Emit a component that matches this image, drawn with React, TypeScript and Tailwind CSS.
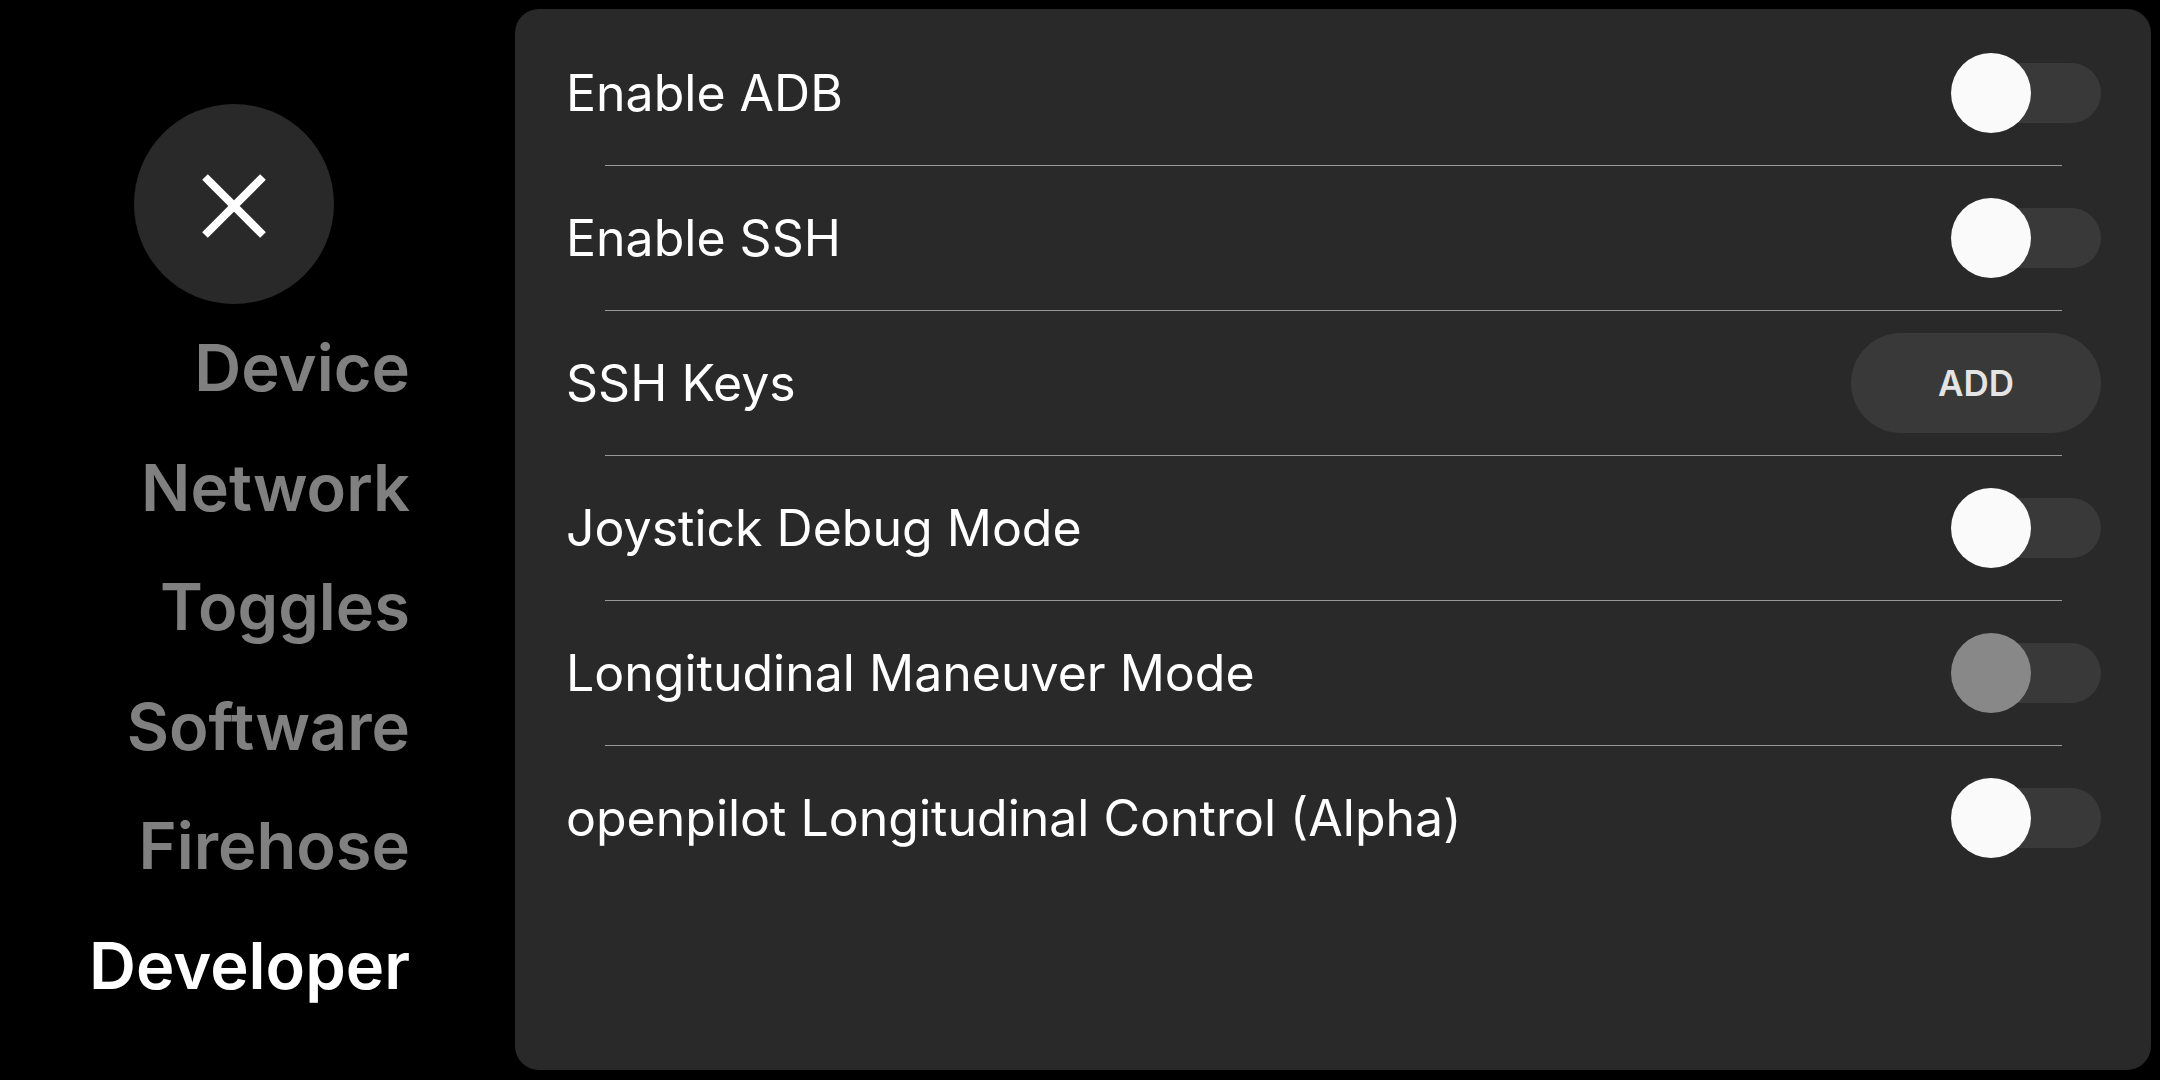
import React from "react";

type Row =
  | { label: string; kind: "toggle"; disabled?: boolean }
  | { label: string; kind: "button"; action: string };

const rows: Row[] = [
  { label: "Enable ADB", kind: "toggle" },
  { label: "Enable SSH", kind: "toggle" },
  { label: "SSH Keys", kind: "button", action: "ADD" },
  { label: "Joystick Debug Mode", kind: "toggle" },
  { label: "Longitudinal Maneuver Mode", kind: "toggle", disabled: true },
  { label: "openpilot Longitudinal Control (Alpha)", kind: "toggle" },
];

const navItems = ["Device", "Network", "Toggles", "Software", "Firehose", "Developer"];

function Toggle({ disabled }: { disabled?: boolean }) {
  return (
    <div className="relative w-[150px] h-[80px] shrink-0">
      <div className="absolute right-0 top-[10px] w-[140px] h-[60px] rounded-full bg-[#393939]" />
      <div
        className={
          disabled
            ? "absolute left-0 top-0 w-[80px] h-[80px] rounded-full bg-[#888888]"
            : "absolute left-0 top-0 w-[80px] h-[80px] rounded-full bg-[#fafafa]"
        }
      />
    </div>
  );
}

export default function App() {
  return (
    <div
      className="w-[2160px] h-[1080px] bg-black flex overflow-hidden"
      style={{ fontFamily: "Inter, 'Noto Sans', sans-serif" }}
    >
      {/* sidebar */}
      <div className="w-[515px] shrink-0 flex flex-col">
        <button className="ml-[134px] mt-[104px] w-[200px] h-[200px] rounded-full bg-[#292929] flex items-center justify-center">
          <svg width="64" height="64" viewBox="0 0 64 64" className="mt-[3px]">
            <line x1="3" y1="3" x2="61" y2="61" stroke="white" strokeWidth="8" />
            <line x1="61" y1="3" x2="3" y2="61" stroke="white" strokeWidth="8" />
          </svg>
        </button>
        <nav className="mt-[4px] pr-[105px] flex flex-col items-end">
          {navItems.map((item) => (
            <div
              key={item}
              className={
                item === "Developer"
                  ? "h-[119.5px] flex items-center text-[65px] font-semibold text-white"
                  : "h-[119.5px] flex items-center text-[65px] font-semibold text-[#808080]"
              }
            >
              {item}
            </div>
          ))}
        </nav>
      </div>

      {/* panel */}
      <div className="mt-[9px] mr-[9px] h-[1061px] flex-1 rounded-[24px] bg-[#292929] pl-[51px] pr-[50px] pt-[12px]">
        {rows.map((row, i) => (
          <div key={row.label}>
            {i > 0 && <div className="mx-[39px] h-px bg-[#999999]" />}
            <div className="h-[144px] flex items-center justify-between">
              <span className="text-[50px] text-white">{row.label}</span>
              {row.kind === "toggle" ? (
                <Toggle disabled={row.disabled} />
              ) : (
                <button className="w-[250px] h-[100px] rounded-full bg-[#393939] text-[35px] font-semibold text-[#e4e4e4]">
                  {row.action}
                </button>
              )}
            </div>
          </div>
        ))}
      </div>
    </div>
  );
}
